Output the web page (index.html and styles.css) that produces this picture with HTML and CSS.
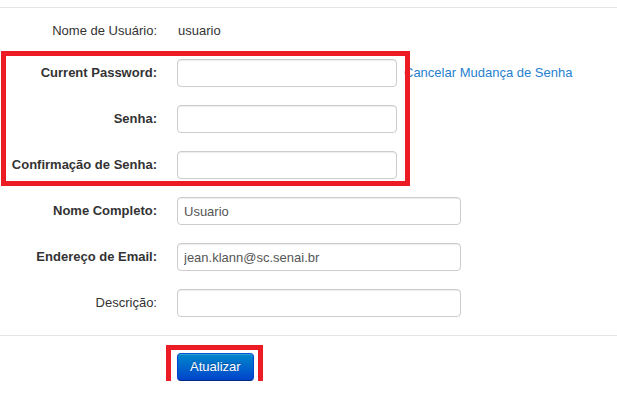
FILE: index.html
```html
<!DOCTYPE html>
<html lang="pt-BR">
<head>
<meta charset="utf-8">
<title>Editar usuário</title>
<link rel="stylesheet" href="styles.css">
</head>
<body>
<div class="page">
  <form class="form">
    <div class="row row-static">
      <span class="label plain">Nome de Usuário:</span>
      <span class="static">usuario</span>
    </div>
    <div class="row">
      <label class="label">Current Password:</label>
      <div class="controls">
        <input class="input input-large" type="password">
        <a class="link" href="#">Cancelar Mudança de Senha</a>
      </div>
    </div>
    <div class="row">
      <label class="label">Senha:</label>
      <div class="controls"><input class="input input-large" type="password"></div>
    </div>
    <div class="row">
      <label class="label">Confirmação de Senha:</label>
      <div class="controls"><input class="input input-large" type="password"></div>
    </div>
    <div class="row">
      <label class="label">Nome Completo:</label>
      <div class="controls"><input class="input input-xlarge" type="text" value="Usuario"></div>
    </div>
    <div class="row">
      <label class="label">Endereço de Email:</label>
      <div class="controls"><input class="input input-xlarge" type="text" value="jean.klann@sc.senai.br"></div>
    </div>
    <div class="row">
      <label class="label plain">Descrição:</label>
      <div class="controls"><input class="input input-xlarge" type="text"></div>
    </div>
    <div class="actions">
      <button class="btn-primary" type="button">Atualizar</button>
    </div>
  </form>
  <div class="highlight highlight-passwords"></div>
  <div class="highlight highlight-button"></div>
</div>
</body>
</html>
```

FILE: styles.css
```css
html, body {
  margin: 0;
  padding: 0;
  background: #ffffff;
}

body {
  font-family: "Liberation Sans", Arial, sans-serif;
  font-size: 13px;
  line-height: 18px;
  color: #333333;
}

.page {
  position: relative;
  padding-top: 7px;
}

.form {
  margin: 0;
  border-top: 1px solid #e5e5e5;
  padding-top: 9px;
}

.row {
  display: grid;
  grid-template-columns: 157px auto;
  column-gap: 20px;
  align-items: center;
  height: 28px;
  margin-bottom: 18px;
}

.row-static {
  margin-bottom: 14px;
}

.label {
  text-align: right;
  font-weight: bold;
  color: #333333;
  white-space: nowrap;
}

.label.plain {
  font-weight: normal;
}

.static {
  padding-left: 1px;
  color: #333333;
}

.controls {
  display: flex;
  align-items: center;
  gap: 7px;
}

.input {
  box-sizing: border-box;
  height: 28px;
  margin: 0;
  padding: 4px 6px;
  border: 1px solid #cccccc;
  border-radius: 4px;
  background: #ffffff;
  box-shadow: inset 0 1px 1px rgba(0, 0, 0, 0.075);
  font-family: "Liberation Sans", Arial, sans-serif;
  font-size: 13px;
  line-height: 18px;
  color: #555555;
}

.input-large {
  width: 220px;
}

.input-xlarge {
  width: 284px;
}

.link {
  color: #1f7fcf;
  text-decoration: none;
  white-space: nowrap;
}

.actions {
  border-top: 1px solid #e5e5e5;
  padding: 17px 0 0 177px;
}

.btn-primary {
  box-sizing: border-box;
  height: 28px;
  padding: 4px 12px;
  border: 1px solid #0044cc;
  border-color: #0055cc #0044cc #002a80;
  border-radius: 4px;
  background: linear-gradient(to bottom, #0088cc, #0044cc);
  box-shadow: inset 0 1px 0 rgba(255, 255, 255, 0.2), 0 1px 2px rgba(0, 0, 0, 0.05);
  color: #ffffff;
  font-family: "Liberation Sans", Arial, sans-serif;
  font-size: 13px;
  line-height: 18px;
  text-shadow: 0 -1px 0 rgba(0, 0, 0, 0.25);
  cursor: pointer;
}

.highlight {
  position: absolute;
  box-sizing: border-box;
  border: 5px solid #ed1c24;
  pointer-events: none;
}

.highlight-passwords {
  left: 1px;
  top: 51px;
  width: 409px;
  height: 135px;
}

.highlight-button {
  left: 166px;
  top: 345px;
  width: 97px;
  height: 43px;
}
```
